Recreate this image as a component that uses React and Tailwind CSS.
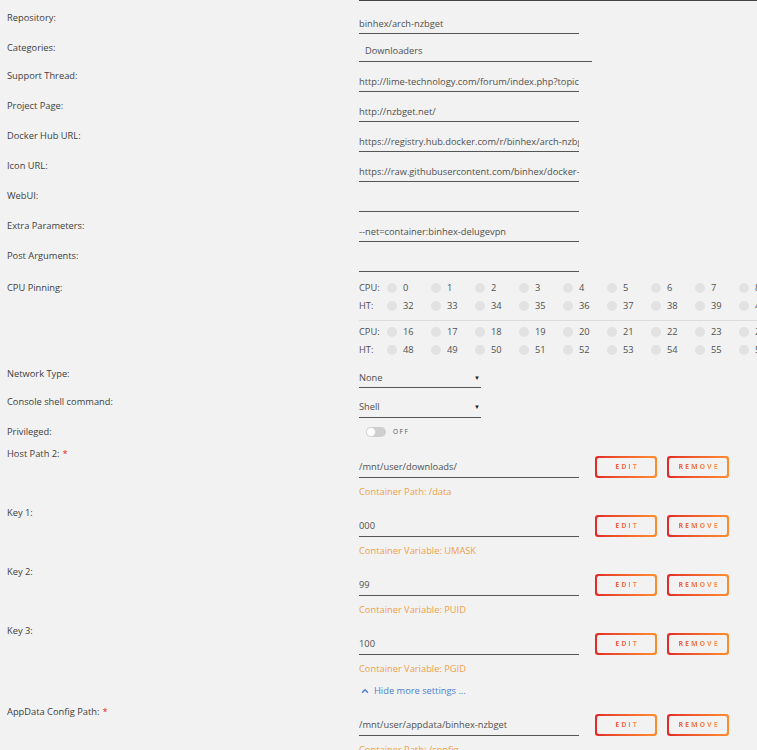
import { ChevronUp } from "lucide-react";

function Label({ children, req, className = "" }) {
  return (
    <div className={`w-[359px] shrink-0 pl-[7px] leading-[14px] text-[#404040] ${className}`}>
      {children}
      {req && <span className="ml-[3px] text-[#e22828]">*</span>}
    </div>
  );
}

function TextRow({ label, value }) {
  return (
    <div className="flex">
      <Label className="pt-[7px]">{label}</Label>
      <div className="w-[220px] overflow-hidden whitespace-nowrap border-b border-[#555] pt-[13px] pb-[2px] leading-[14px] text-[#505050]">
        {value || "\u00a0"}
      </div>
    </div>
  );
}

function GradButton({ children }) {
  return (
    <div className="h-[22px] w-[62px] rounded-[3px] bg-gradient-to-r from-[#e22828] to-[#ff8c2f] p-[2px]">
      <div className="flex h-full w-full items-center justify-center rounded-[2px] bg-[#f2f2f2]">
        <span className="bg-gradient-to-r from-[#e8504a] to-[#ff9a4a] bg-clip-text pl-[2px] text-[7px] font-bold tracking-[2px] text-transparent">
          {children}
        </span>
      </div>
    </div>
  );
}

function VarRow({ label, req, value, sub }) {
  return (
    <div className="flex">
      <Label className="pt-[7px]" req={req}>{label}</Label>
      <div className="flex items-start">
        <div className="w-[220px]">
          <div className="overflow-hidden whitespace-nowrap border-b border-[#555] pt-[20px] pb-[3px] leading-[14px] text-[#505050]">
            {value}
          </div>
          <div className="mt-[7px] whitespace-nowrap leading-[14px] text-[#f0a04b]">{sub}</div>
        </div>
        <div className="ml-[16px] mt-[16px] flex gap-[10px]">
          <GradButton>EDIT</GradButton>
          <GradButton>REMOVE</GradButton>
        </div>
      </div>
    </div>
  );
}

function CpuLine({ label, nums }) {
  return (
    <div className="flex h-[18px] items-center whitespace-nowrap leading-[18px] text-[#505050]">
      <div className="w-[28px] shrink-0">{label}</div>
      {nums.map((n) => (
        <div key={n} className="flex w-[44px] shrink-0 items-center">
          <span className="h-[10px] w-[10px] rounded-full bg-[#e2e2e2]" />
          <span className="ml-[6px]">{n}</span>
        </div>
      ))}
    </div>
  );
}

const range = (a) => Array.from({ length: 9 }, (_, i) => a + i);

export default function App() {
  return (
    <div className="min-h-screen w-full overflow-hidden bg-[#f2f2f2] font-['Open_Sans',sans-serif] text-[9.3px] text-[#505050]">
      <div className="ml-[359px] h-px bg-[#444]" />
      <div className="mt-[3px]" />

      <TextRow label="Repository:" value="binhex/arch-nzbget" />

      <div className="flex">
        <Label className="pt-[7px]">Categories:</Label>
        <div className="w-[233px] border-b border-[#555] pt-[10px] pb-[3px] pl-[6px] leading-[14px]">
          Downloaders
        </div>
      </div>

      <TextRow label="Support Thread:" value="http://lime-technology.com/forum/index.php?topic=45837.0" />
      <TextRow label="Project Page:" value="http://nzbget.net/" />
      <TextRow label="Docker Hub URL:" value="https://registry.hub.docker.com/r/binhex/arch-nzbget/" />
      <TextRow label="Icon URL:" value="https://raw.githubusercontent.com/binhex/docker-templates/master/binhex/images/nzbget-icon.png" />
      <TextRow label="WebUI:" value="" />
      <TextRow label="Extra Parameters:" value="--net=container:binhex-delugevpn" />
      <TextRow label="Post Arguments:" value="" />

      <div className="flex pb-[1px]">
        <Label className="pt-[9px]">CPU Pinning:</Label>
        <div className="min-w-0 flex-1 pt-[7px]">
          <CpuLine label="CPU:" nums={range(0)} />
          <CpuLine label="HT:" nums={range(32)} />
          <div className="mt-[5px] h-px bg-[#dcdcdc]" />
          <div className="mt-[2px]" />
          <CpuLine label="CPU:" nums={range(16)} />
          <CpuLine label="HT:" nums={range(48)} />
        </div>
      </div>

      <div className="flex">
        <Label className="pt-[7px]">Network Type:</Label>
        <div className="flex w-[122px] items-center justify-between border-b border-[#555] pt-[11px] pb-[2px] leading-[14px]">
          <span>None</span>
          <span className="pr-[1px] text-[6px] text-[#222]">▼</span>
        </div>
      </div>

      <div className="flex">
        <Label className="pt-[7px]">Console shell command:</Label>
        <div className="flex w-[122px] items-center justify-between border-b border-[#555] pt-[12px] pb-[3px] leading-[14px]">
          <span>Shell</span>
          <span className="pr-[1px] text-[6px] text-[#222]">▼</span>
        </div>
      </div>

      <div className="flex h-[22px]">
        <Label className="pt-[7px]">Privileged:</Label>
        <div className="flex items-center self-start pl-[7px] pt-[9px]">
          <div className="relative h-[10px] w-[20px] rounded-full bg-[#cfcfcf]">
            <span className="absolute left-0 top-0 h-[10px] w-[10px] rounded-full border border-[#d6d6d6] bg-white" />
          </div>
          <span className="ml-[7px] text-[6.5px] tracking-[1.5px] text-[#555]">OFF</span>
        </div>
      </div>

      <VarRow label="Host Path 2:" req value="/mnt/user/downloads/" sub="Container Path: /data" />
      <VarRow label="Key 1:" value="000" sub="Container Variable: UMASK" />
      <VarRow label="Key 2:" value="99" sub="Container Variable: PUID" />
      <VarRow label="Key 3:" value="100" sub="Container Variable: PGID" />

      <div className="ml-[359px] flex items-center pt-[8px] leading-[14px] text-[#4a7fd0]">
        <ChevronUp size={10} strokeWidth={3.5} className="ml-[1px]" />
        <span className="ml-[4px]">Hide more settings ...</span>
      </div>

      <VarRow label="AppData Config Path:" req value="/mnt/user/appdata/binhex-nzbget" sub="Container Path: /config" />
    </div>
  );
}
